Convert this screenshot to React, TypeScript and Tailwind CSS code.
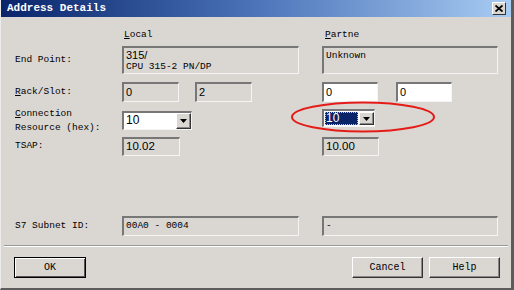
import React from 'react';

const mono = "font-['Liberation_Mono',monospace]";
const sans = "font-['Liberation_Sans',Arial,sans-serif]";

// sunken read-only / editable field
function Field({ w, h, white, children, className }: { w: string; h: string; white?: boolean; children?: React.ReactNode; className?: string }) {
  return (
    <div
      className={`${w} ${h} ${white ? 'bg-white' : 'bg-[#dad7d3]'} border-t-2 border-l-2 border-t-[#777] border-l-[#777] border-r border-b border-r-[#f4f4f4] border-b-[#f4f4f4] pl-[2px] text-black overflow-hidden ${className ?? ''}`}
    >
      {children}
    </div>
  );
}

function DropBtn() {
  return (
    <div className="w-[15px] h-full bg-[#dad7d3] border-t border-l border-t-white border-l-white border-r border-b border-r-[#333] border-b-[#333] shadow-[inset_-1px_-1px_0_#888] flex items-center justify-center">
      <svg width="7" height="4" viewBox="0 0 7 4">
        <path d="M0 0h7L3.5 4z" fill="#000" />
      </svg>
    </div>
  );
}

function Button({ label, def }: { label: string; def?: boolean }) {
  return (
    <div
      className={`h-[21px] flex items-center justify-center text-[10px] text-black bg-[#dad7d3] ${mono} ${
        def
          ? 'w-[72px] border border-black shadow-[inset_1px_1px_0_#fff,inset_-1px_-1px_0_#555]'
          : 'w-[71px] border-t border-l border-t-white border-l-white border-r border-b border-r-[#333] border-b-[#333] shadow-[inset_-1px_-1px_0_#888]'
      }`}
    >
      {label}
    </div>
  );
}

export default function App() {
  return (
    <div className="relative w-[514px] h-[290px] bg-[#dad7d3] flex flex-col border-l border-l-[#ececec] border-r-[3px] border-r-[#5c5c5c] border-b-2 border-b-[#5c5c5c] overflow-hidden">
      {/* title bar */}
      <div className="h-[17px] shrink-0 flex items-center pl-[6px] pr-[5px] bg-linear-to-r from-[#0a246a] via-[#4d74b8] to-[#a8ccf2]">
        <span className={`${mono} text-[11px] font-bold text-white`}>Address Details</span>
        <div className="ml-auto w-[14px] h-[13px] bg-[#dad7d3] border-t border-l border-t-white border-l-white border-r border-b border-r-[#333] border-b-[#333] flex items-center justify-center">
          <svg width="8" height="7" viewBox="0 0 8 7">
            <path d="M0.5 0.5L7.5 6.5M7.5 0.5L0.5 6.5" stroke="#000" strokeWidth="1.8" />
          </svg>
        </div>
      </div>

      <div className={`flex flex-col pl-[14px] ${mono} text-[9.5px] text-black`}>
        {/* column headers */}
        <div className="mt-[12px] h-[13px] flex items-center">
          <div className="w-[107px]" />
          <div className="w-[200px] pl-[2px]">
            <span className="underline">L</span>ocal
          </div>
          <div className="pl-[3px]">
            <span className="underline">P</span>artne
          </div>
        </div>

        {/* end point */}
        <div className="mt-[4px] h-[28px] flex items-center">
          <div className="w-[107px]">End Point:</div>
          <div className="w-[200px]">
            <Field w="w-[177px]" h="h-[28px]" className="leading-[12px] pt-[1px]">
              <div className={`${sans} text-[11px]`}>315/</div>
              <div>CPU 315-2 PN/DP</div>
            </Field>
          </div>
          <Field w="w-[176px]" h="h-[28px]" className="pt-[2px] leading-[12px]">
            Unknown
          </Field>
        </div>

        {/* rack / slot */}
        <div className="mt-[8px] h-[20px] flex items-center">
          <div className="w-[107px]">
            <span className="underline">R</span>ack/Slot:
          </div>
          <div className="w-[200px] flex gap-[16px]">
            <Field w="w-[57px]" h="h-[20px]" className={`${sans} text-[11px] leading-[16px]`}>0</Field>
            <Field w="w-[57px]" h="h-[20px]" className={`${sans} text-[11px] leading-[16px]`}>2</Field>
          </div>
          <div className="flex gap-[18px]">
            <Field w="w-[56px]" h="h-[20px]" white className={`${sans} text-[11px] leading-[16px]`}>0</Field>
            <Field w="w-[56px]" h="h-[20px]" white className={`${sans} text-[11px] leading-[16px]`}>0</Field>
          </div>
        </div>

        {/* connection resource */}
        <div className="mt-[4px] h-[28px] flex items-start">
          <div className="w-[107px] leading-[14px] pt-[1px]">
            <div>
              <span className="underline">C</span>onnection
            </div>
            <div>Resource (hex):</div>
          </div>
          <div className="w-[200px] pt-[5px]">
            <Field w="w-[70px]" h="h-[19px]" white className="flex !pl-[2px]">
              <div className={`flex-1 ${sans} text-[12px] leading-[15px]`}>10</div>
              <DropBtn />
            </Field>
          </div>
          <div className="pt-[3px]">
            <Field w="w-[53px]" h="h-[18px]" white className="flex !pl-[1px] py-[1px]">
              <div className={`w-[33px] bg-[#0a246a] text-white ${sans} text-[12px] leading-[13px] pl-[1px] outline-1 outline-dotted outline-[#c0c0c0] -outline-offset-1`}>10</div>
              <div className="ml-auto">
                <DropBtn />
              </div>
            </Field>
          </div>
        </div>

        {/* TSAP */}
        <div className="mt-[2px] h-[20px] flex items-center">
          <div className="w-[107px]">TSAP:</div>
          <div className="w-[200px]">
            <Field w="w-[58px]" h="h-[19px]" className={`${sans} text-[11.5px] leading-[15px]`}>10.02</Field>
          </div>
          <Field w="w-[57px]" h="h-[19px]" className={`${sans} text-[11.5px] leading-[15px]`}>10.00</Field>
        </div>

        {/* S7 subnet */}
        <div className="mt-[60px] h-[20px] flex items-center">
          <div className="w-[107px]">S7 Subnet ID:</div>
          <div className="w-[200px]">
            <Field w="w-[177px]" h="h-[20px]" className="leading-[16px]">00A0 - 0004</Field>
          </div>
          <Field w="w-[176px]" h="h-[20px]" className="leading-[16px]">-</Field>
        </div>
      </div>

      {/* separator */}
      <div className="mt-[9px] mx-[3px] h-[2px] border-t border-t-[#9a9a9a] border-b border-b-white" />

      {/* buttons */}
      <div className="mt-[10px] flex pl-[13px] pr-[11px] gap-[6px]">
        <Button label="OK" def />
        <div className="ml-auto" />
        <Button label="Cancel" />
        <Button label="Help" />
      </div>

      {/* red annotation ellipse */}
      <svg className="absolute left-[288px] top-[100px]" width="148" height="34" viewBox="0 0 148 34">
        <ellipse cx="74" cy="17" rx="71" ry="14.5" fill="none" stroke="#e41b17" strokeWidth="2" />
      </svg>
    </div>
  );
}
